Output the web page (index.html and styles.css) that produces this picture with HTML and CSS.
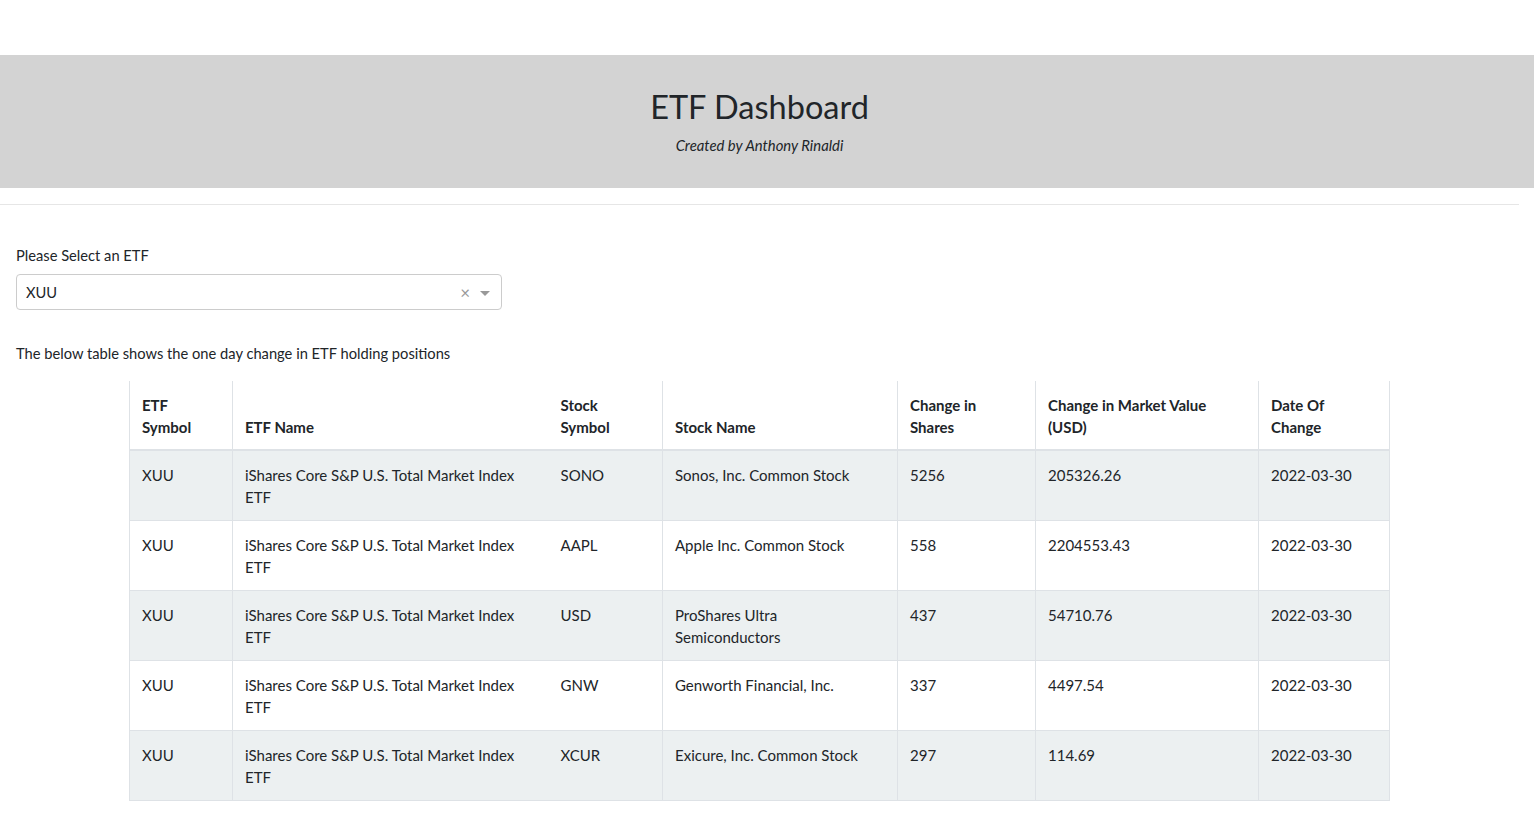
FILE: index.html
```html
<!DOCTYPE html>
<html lang="en">
<head>
<meta charset="utf-8">
<title>ETF Dashboard</title>
<link rel="stylesheet" href="styles.css">
</head>
<body>
<div class="page">
  <header class="banner">
    <div class="banner-inner">
      <h1 class="title">ETF Dashboard</h1>
      <p class="subtitle">Created by Anthony Rinaldi</p>
    </div>
  </header>
  <div class="main">
    <hr class="divider">
    <div class="content">
      <label class="field-label">Please Select an ETF</label>
      <div class="select">
        <span class="select-value">XUU</span>
        <span class="select-clear">×</span>
        <span class="select-caret"></span>
      </div>
      <p class="note">The below table shows the one day change in ETF holding positions</p>
    </div>
    <div class="table-wrap">
      <table class="holdings">
        <colgroup>
          <col class="c1"><col class="c2"><col class="c3"><col class="c4"><col class="c5"><col class="c6"><col class="c7">
        </colgroup>
        <thead>
          <tr>
            <th>ETF<br>Symbol</th>
            <th class="nb">ETF Name</th>
            <th>Stock<br>Symbol</th>
            <th>Stock Name</th>
            <th>Change in<br>Shares</th>
            <th>Change in Market Value<br>(USD)</th>
            <th class="last">Date Of<br>Change</th>
          </tr>
        </thead>
        <tbody>
          <tr class="odd">
            <td>XUU</td><td class="nb">iShares Core S&amp;P U.S. Total Market Index ETF</td><td>SONO</td><td>Sonos, Inc. Common Stock</td><td>5256</td><td>205326.26</td><td class="last">2022-03-30</td>
          </tr>
          <tr>
            <td>XUU</td><td class="nb">iShares Core S&amp;P U.S. Total Market Index ETF</td><td>AAPL</td><td>Apple Inc. Common Stock</td><td>558</td><td>2204553.43</td><td class="last">2022-03-30</td>
          </tr>
          <tr class="odd">
            <td>XUU</td><td class="nb">iShares Core S&amp;P U.S. Total Market Index ETF</td><td>USD</td><td>ProShares Ultra Semiconductors</td><td>437</td><td>54710.76</td><td class="last">2022-03-30</td>
          </tr>
          <tr>
            <td>XUU</td><td class="nb">iShares Core S&amp;P U.S. Total Market Index ETF</td><td>GNW</td><td>Genworth Financial, Inc.</td><td>337</td><td>4497.54</td><td class="last">2022-03-30</td>
          </tr>
          <tr class="odd">
            <td>XUU</td><td class="nb">iShares Core S&amp;P U.S. Total Market Index ETF</td><td>XCUR</td><td>Exicure, Inc. Common Stock</td><td>297</td><td>114.69</td><td class="last">2022-03-30</td>
          </tr>
        </tbody>
      </table>
    </div>
  </div>
</div>
</body>
</html>
```
FILE: styles.css
```css
html, body {
  margin: 0;
  padding: 0;
  background: #fff;
}
body {
  font-family: Lato, "Open Sans", sans-serif;
  font-size: 14.7px;
  line-height: 1.5;
  color: #212529;
}
.page {
  padding-top: 55px;
}
.banner {
  background: #d3d3d3;
  height: 133px;
}
.banner-inner {
  width: 1519px;
  text-align: center;
  padding-top: 32px;
}
.title {
  margin: 0;
  font-size: 32.5px;
  font-weight: 400;
  line-height: 40px;
}
.subtitle {
  margin: 7px 0 0;
  font-style: italic;
  font-size: 14.85px;
  line-height: 22px;
}
.main {
  width: 1519px;
}
.divider {
  margin: 16px 0 0;
  border: 0;
  border-top: 1px solid #e6e6e6;
  height: 0;
}
.content {
  padding: 39px 16px 0;
}
.field-label {
  display: block;
  margin-bottom: 8px;
  line-height: 22px;
}
.select {
  width: 484px;
  height: 34px;
  border: 1px solid #ccc;
  border-radius: 4px;
  display: flex;
  align-items: center;
  box-sizing: content-box;
}
.select-value {
  flex: 1;
  padding-left: 9px;
  line-height: 20px;
  margin-top: -1px;
}
.select-clear {
  color: #999;
  font-size: 17px;
  margin-right: 10px;
  line-height: 1;
}
.select-caret {
  width: 0;
  height: 0;
  border-left: 5px solid transparent;
  border-right: 5px solid transparent;
  border-top: 5px solid #999;
  margin-right: 11px;
  margin-top: 2px;
}
.note {
  margin: 32px 0 0;
  line-height: 22px;
}
.table-wrap {
  display: flex;
  justify-content: center;
  margin-top: 17px;
}
.holdings {
  width: 1261px;
  table-layout: fixed;
  border-collapse: collapse;
  border-left: 1px solid #dee2e6;
  border-bottom: 1px solid #dee2e6;
  font-size: 15px;
}
.c1 { width: 103px; }
.c2 { width: 316px; }
.c3 { width: 114px; }
.c4 { width: 235px; }
.c5 { width: 138px; }
.c6 { width: 223px; }
.c7 { width: 131px; }
.holdings th,
.holdings td {
  text-align: left;
  vertical-align: top;
  padding: 13px 12px 11px;
  line-height: 22px;
  border-right: 1px solid #dee2e6;
  border-top: 1px solid #dee2e6;
}
.holdings th {
  font-weight: 700;
  vertical-align: bottom;
  border-top: 0;
  border-bottom: 2px solid #dee2e6;
  height: 44px;
}
.holdings td {
  height: 45px;
}
.holdings .nb {
  border-right: 0;
}
.holdings tr.odd td {
  background: #ecf0f1;
}
```
